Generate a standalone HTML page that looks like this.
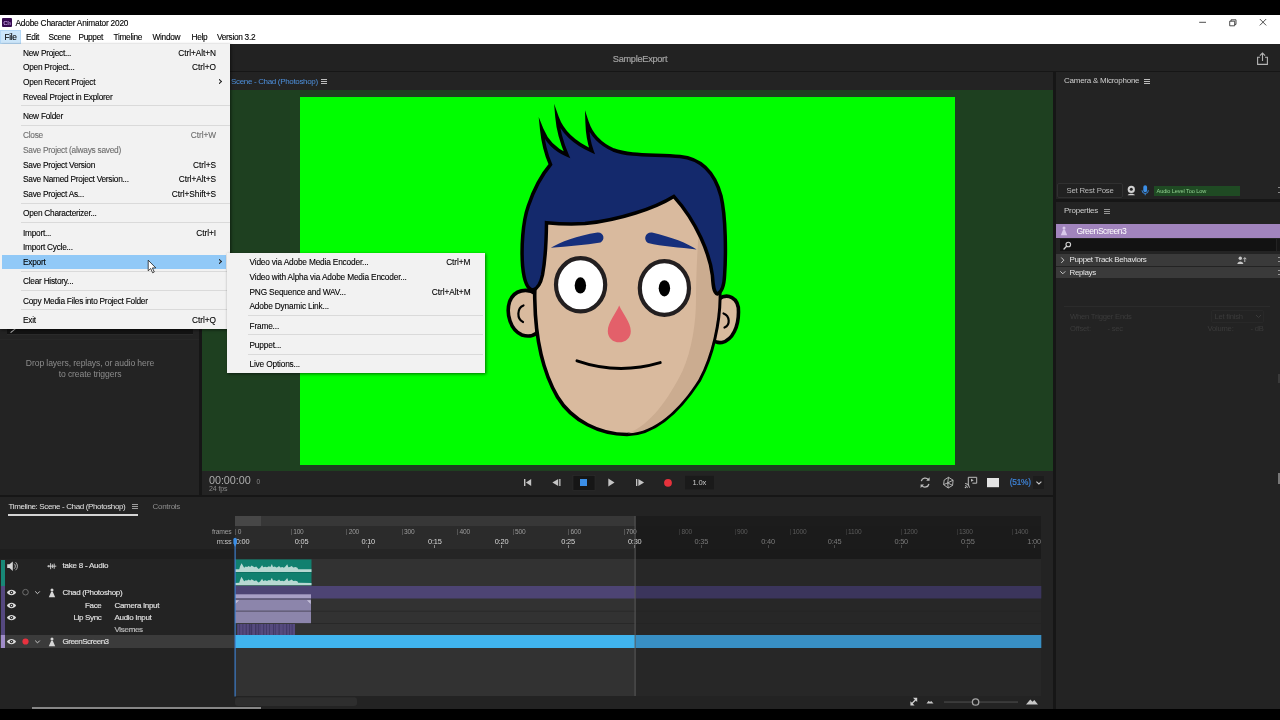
<!DOCTYPE html>
<html lang="en">
<head>
<meta charset="utf-8">
<title>Adobe Character Animator 2020</title>
<style>
*{box-sizing:border-box;margin:0;padding:0}
html,body{width:1280px;height:720px;overflow:hidden;background:#000}
body{position:relative;will-change:transform;font-family:"Liberation Sans",sans-serif;font-size:8px;color:#c8c8c8;-webkit-font-smoothing:antialiased}
.abs{position:absolute}
.t{position:absolute;white-space:pre;line-height:10px;height:10px}
/* title + menubar */
#titlebar{position:absolute;left:0;top:15px;width:1280px;height:15px;background:#fff}
#menubar{position:absolute;left:0;top:30px;width:1280px;height:14px;background:#fff}
#titlebar .t,#menubar .t{color:#000;font-size:8.3px;letter-spacing:-.3px;margin-top:.7px;-webkit-text-stroke:.12px #000}
#menubar .t{margin-top:0}
#app{position:absolute;left:0;top:44px;width:1280px;height:664.7px;background:#161616;overflow:hidden}
.panel{position:absolute;background:#232323}
/* dropdown menus */
.menu{position:absolute;-webkit-text-stroke:.1px currentColor;background:#f2f2f2;color:#000;font-size:8.3px;letter-spacing:-.25px;box-shadow:1px 1px 3px rgba(0,0,0,.55)}
.menu .mi{position:relative;height:14.66px;line-height:14.66px;white-space:pre}
.menu .mi .l{position:absolute;left:0;top:1.1px}
.menu .mi .r{position:absolute;top:1.1px}
.menu .sep{height:4.7px;position:relative}
.menu .sep:after{content:"";position:absolute;top:2px;height:1px;background:#dadada}
.menu .dis{color:#6d6d6d}
.ham{width:6px;height:5.4px;border-top:1px solid #bdbdbd;border-bottom:1px solid #bdbdbd}
.ham:after{content:"";position:absolute;left:0;top:1.2px;width:6px;height:1px;background:#bdbdbd}
.menu .mi .l{left:23px}
.menu .mi .r{right:13.5px;letter-spacing:-.05px}
#m2 .mi .r{right:14.2px}
.menu .mi .ar{position:absolute;left:218.8px;top:4.6px;width:3.4px;height:5.6px;font-size:0;color:transparent;overflow:hidden}
.menu .mi .ar:after{content:"";position:absolute;left:-2.6px;top:.6px;width:4px;height:4px;border-right:.9px solid #222;border-top:.9px solid #222;transform:rotate(45deg)}
.menu .mi .hl{position:absolute;left:2px;width:224px;top:1px;height:14.3px;background:#91c9f7}
.menu .sep:after{left:21px;right:0}
#m2 .sep:after{left:21.5px;right:2px}
.hd{font-size:8px;color:#dedede;letter-spacing:-.32px;-webkit-text-stroke:.2px #dedede}
#m2{letter-spacing:-.17px}
</style>
</head>
<body>
<div id="titlebar">
<div class="abs" style="left:2px;top:3px;width:9.5px;height:9px;background:#35094f;border-radius:1px"></div>
<div class="t" style="left:3.2px;top:2.6px;font-size:6px;color:#d9a6ff;letter-spacing:-0.3px;font-weight:bold">Ch</div>
<div class="t" style="left:15.5px;top:2.5px;letter-spacing:-.2px">Adobe Character Animator 2020</div>
<svg class="abs" style="left:1190px;top:0" width="90" height="15" viewBox="0 0 90 15"><g fill="none" stroke="#222" stroke-width="0.8">
<path d="M9.2 7.3h6.8"/>
<path d="M39.7 6.2h5v4.6h-5z M41 6.2v-1.4h5v4.6h-1.3"/>
<path d="M69.8 4l6.4 6.4 M76.2 4l-6.4 6.4"/>
</g></svg>
</div>
<div id="menubar">
<div class="abs" style="left:0;top:0;width:21px;height:14px;background:#cce6fa;border:1px solid #b4d8f6"></div>
<div class="t" style="left:4.5px;top:2px">File</div>
<div class="t" style="left:26px;top:2px">Edit</div>
<div class="t" style="left:48.5px;top:2px">Scene</div>
<div class="t" style="left:78.5px;top:2px">Puppet</div>
<div class="t" style="left:113.5px;top:2px">Timeline</div>
<div class="t" style="left:152.5px;top:2px">Window</div>
<div class="t" style="left:191.5px;top:2px">Help</div>
<div class="t" style="left:217px;top:2px">Version 3.2</div>
</div>
<div id="app">
<!-- workspace bar -->
<div class="panel" id="wsbar" style="left:0;top:0;width:1280px;height:27px;background:#222">
<div class="t ui" style="left:580px;width:120px;text-align:center;top:9.8px;color:#a2a2a2;font-size:9.2px;letter-spacing:-.28px;-webkit-text-stroke:.2px #a2a2a2">SampleExport</div>
<svg class="abs" style="left:1256px;top:7.7px" width="13" height="14" viewBox="0 0 13 14"><g fill="none" stroke="#b4b4b4" stroke-width="1.1"><path d="M4 5.2H1.6v7.2h9.8V5.2H9"/><path d="M6.5 9V1.2M3.9 3.6L6.5 1l2.6 2.6"/></g></svg>
</div>
<!-- left panel (Triggers) -->
<div class="panel" id="left" style="left:0;top:28px;width:199px;height:423px">
<div class="abs" style="left:6.5px;top:256px;width:186.5px;height:7.2px;background:#131313;border-bottom:1px solid #2a2a2a"></div>
<div class="abs" style="left:9.5px;top:258.2px;width:6.5px;height:1.3px;background:#c0c0c0;transform:rotate(-38deg)"></div>
<div class="abs" style="left:0;top:266.5px;width:199px;height:1px;background:#272727"></div>
<div class="t ui" style="left:0;width:180px;text-align:center;top:286px;color:#8c8c8c;font-size:8.6px;letter-spacing:-.1px">Drop layers, replays, or audio here</div>
<div class="t ui" style="left:0;width:180px;text-align:center;top:297px;color:#8c8c8c;font-size:8.6px;letter-spacing:-.1px">to create triggers</div>
</div>
<!-- scene panel -->
<div class="panel" id="scene" style="left:202px;top:28px;width:851px;height:423px">
<div class="t ui" style="left:29px;top:5px;color:#4d8fdb;font-size:8px;letter-spacing:-.33px">Scene - Chad (Photoshop)</div>
<div class="abs ham" style="left:118.5px;top:7px"></div>
<div class="abs" id="viewport" style="left:0;top:18px;width:851px;height:381px;background:#1e4020">
<div class="abs" id="green" style="left:98px;top:7px;width:655px;height:368px;background:#00fe00">
<svg class="abs" style="left:0;top:0" width="655" height="368" viewBox="300 97 655 368">
<g stroke="#000" stroke-width="3.6" stroke-linejoin="round">
<!-- ears -->
<path d="M536 294 C528 288,514 289,509.5 302 C506 313,510 330,522 335 C528 337,533 336,537 333 Z" fill="#d9ba9e"/>
<path d="M719 299 C727 293,739 297,738.5 312 C738.5 326,733 340,722 342.5 C718 343,715 342,713 340 Z" fill="#d9ba9e"/>
<!-- face -->
<path id="facep" d="M545 215 C538 250,534 278,534.8 300 C535.5 340,543 372,557.5 397 C572 421,600 434.5,627 434.5 C655 434,680 410,699.5 380 C713 355,719.5 322,719.8 298 C720 270,716 240,705 212 L674 190 Z" fill="#d9ba9e"/>
</g>
<!-- face shadow -->
<path d="M700 214 C716 240,719 270,718.6 298 C718.3 322,712 355,698.5 379.5 C680 409,655 432.8,628 433.3 C650 425,668 400,682.5 371 C692 350,696 322,696 300 C696 270,698 240,700 214 Z" fill="#cbac90"/>
<!-- ear inner -->
<g fill="none" stroke="#000" stroke-width="2.2" stroke-linecap="round">
<path d="M523.5 305.5 C517 308,516.5 319,523 322"/>
<path d="M723.5 313.5 C730 316,730.5 325,724.5 327.5"/>
</g>
<!-- hair -->
<path d="M533 290 C527.5 289.500,524 281,522.600 266 C521.2 248,522.6 222,528.3 206 C533 192,540 177,550.5 164.5 C545.5 153,543 142,541.7 129.200 C546 140,553 149,567 155 C561 141,558 129,557 117.200 C561.500 130,572 142,592 151 C588.300 141,587.400 132,587.100 122.200 C591 134,598 143,613.500 150 C630 156.300,655 154.300,680 156.500 C701 158.500,714.500 172,721 196 C726 217,726 255,724.600 275 C724.200 284,722 292,717.500 294 C713.400 293,713 284,712.400 275.400 C710 255,697 222,673.800 196.400 C655 208,620 220,585 223.6 C570 224.6,556 223.7,546.5 222.7 C546.300 240,545.300 260,542.500 275 C541 282,538.500 288.500,533 290 Z" fill="#14296c" stroke="#000" stroke-width="3.5" stroke-linejoin="miter" stroke-miterlimit="30"/>
<!-- brows -->
<path d="M550.800 247.800 C560 242,577 235.500,597.500 232.400 C604 232,605.500 239.500,600.500 242.500 C585 245.500,568 246,550.800 247.800 Z" fill="#162f7c"/>
<path d="M696.600 249.600 C688 243.500,671 237,652 232.600 C645 232,643 240,648 243 C662 246.500,680 247.300,696.600 249.600 Z" fill="#162f7c"/>
<!-- eyes -->
<g fill="#fff" stroke="#231f20" stroke-width="4.2">
<ellipse cx="580.6" cy="284.8" rx="24.6" ry="26.6"/>
<ellipse cx="664.4" cy="288" rx="24.6" ry="26.8"/>
</g>
<ellipse cx="580.4" cy="285.4" rx="5.700" ry="8.100" fill="#000"/>
<ellipse cx="664.4" cy="288.3" rx="5.700" ry="8.100" fill="#000"/>
<!-- nose -->
<path d="M619.200 305.500 C622.500 313.500,630.800 322,630.800 331.200 C630.800 338,625.500 342.300,619.300 342.300 C613 342.300,607.800 338,607.800 331.200 C607.800 322,616 313.500,619.200 305.500 Z" fill="#e3606a"/>
<!-- mouth -->
<path d="M577 360.8 Q618 375 660.2 362.6" fill="none" stroke="#000" stroke-width="3" stroke-linecap="round"/>
</svg>
</div>
</div>
<div class="abs" id="transport" style="left:0;top:399px;width:851px;height:24px">
<div class="t ui" style="left:7px;top:3.5px;font-size:10.8px;line-height:11px;color:#adadad;letter-spacing:-.05px">00:00:00</div>
<div class="t ui" style="left:54.5px;top:5.5px;font-size:6.5px;color:#8a8a8a">0</div>
<div class="t ui" style="left:7px;top:13.3px;font-size:7px;color:#8a8a8a;letter-spacing:-.1px">24 fps</div>
<svg class="abs" style="left:310px;top:0" width="220" height="24" viewBox="512 471 220 24">
<g fill="#c4c4c4">
<rect x="524" y="479" width="1.4" height="7"/><path d="M531.2 479v7l-5.3-3.5z"/>
<path d="M558.2 479v7l-5.8-3.5z"/><rect x="559.2" y="479" width="1.3" height="7"/>
<path d="M608.3 478.6v7.8l6.2-3.9z"/>
<rect x="636" y="479" width="1.3" height="7"/><path d="M638.3 479v7l5.8-3.5z"/>
</g>
<rect x="573" y="475.5" width="22" height="15" fill="#161616" stroke="#2e2e2e" stroke-width=".6"/>
<rect x="580" y="479" width="7" height="7" fill="#3b8ee6"/>
<circle cx="668" cy="482.8" r="3.9" fill="#e6323c"/>
<rect x="685" y="475.8" width="29" height="13.6" fill="#1a1a1a"/>
<text x="699.3" y="485.4" font-family="Liberation Sans, sans-serif" font-size="7.6" fill="#c8c8c8" text-anchor="middle" letter-spacing="-.2">1.0x</text>
</svg>
<svg class="abs" style="left:708px;top:0" width="143" height="24" viewBox="910 471 143 24">
<g fill="none" stroke="#bdbdbd" stroke-width="1.3">
<path d="M921.3 481.2a4 4 0 0 1 7-1.6"/><path d="M928.9 484a4 4 0 0 1-7 1.6"/>
</g>
<path d="M929.6 477.3v3.4h-3.4z M920.6 487.9v-3.4h3.4z" fill="#bdbdbd"/>
<g fill="none" stroke="#bdbdbd" stroke-width=".9" stroke-linejoin="round">
<path d="M948.5 477.3l4.6 2.9-.5 5.2-4.4 2.6-4.6-3.4.6-4.6z"/><path d="M948.5 477.3l-.8 5.6 4.9 2.5M947.700 482.9l-4.100 1.700M947.700 482.900l.500 5.100M947.700 482.900L953.100 480.200"/>
<path d="M968.3 485.500V477.300h8.400v5.900h-4.300" stroke-width="1"/>
<path d="M965.200 483.400a4.500 4.500 0 0 1 4.300 4.300M965.200 485.600a2.300 2.300 0 0 1 2.200 2.200" stroke-width="1"/>
</g>
<path d="M971 478.800v3l2.700-1.500z" fill="#bdbdbd"/>
<circle cx="965.500" cy="487.500" r=".8" fill="#bdbdbd"/>
<rect x="987" y="478" width="12" height="9.200" fill="#e4e4e4"/>
<text x="1009.800" y="485.400" font-family="Liberation Sans, sans-serif" font-size="8.3" fill="#3f86dc" letter-spacing="-.25" stroke="#3f86dc" stroke-width=".2">(51%)</text>
<rect x="1033" y="476" width="11" height="13" fill="#1c1c1c"/>
<path d="M1036.400 481.600l2.500 2.400 2.500-2.400" fill="none" stroke="#c8c8c8" stroke-width="1.100"/>
</svg>
</div>
</div>
<!-- camera & microphone -->
<div class="panel" id="cam" style="left:1056px;top:28px;width:224px;height:127px">
<div class="t ui" style="left:8px;top:4px;color:#cfcfcf;font-size:8px;letter-spacing:-.25px">Camera &amp; Microphone</div>
<div class="abs ham" style="left:87.5px;top:6.5px"></div>
<div class="abs" style="left:1px;top:111px;width:66px;height:15px;border:1px solid #303030;border-radius:2px;background:#212121"></div>
<div class="t ui" style="left:1px;width:66px;text-align:center;top:113.5px;color:#b9b9b9;font-size:7.8px;letter-spacing:-.2px">Set Rest Pose</div>
<svg class="abs" style="left:70px;top:111px" width="26" height="15" viewBox="1126 183 26 15">
<circle cx="1131.3" cy="189.400" r="3.600" fill="#d2d2d2"/><circle cx="1131.300" cy="189.200" r="1.500" fill="#232323"/><path d="M1127.700 195.300c.400-2 6.800-2 7.200 0z" fill="#d2d2d2"/>
<rect x="1143.300" y="185.200" width="3.800" height="7" rx="1.900" fill="#3b8ee6"/><path d="M1142 190.300a3.200 3.200 0 0 0 6.400 0M1145.200 193.500v1.800" fill="none" stroke="#3b8ee6" stroke-width=".9"/>
</svg>
<div class="abs" style="left:98px;top:114px;width:85.500px;height:9.500px;background:#1f4a23"></div>
<div class="t ui" style="left:100.500px;top:113.800px;color:#8fd08f;font-size:5.600px;letter-spacing:-.1px">Audio Level Too Low</div>
<div class="abs" style="left:221.500px;top:115px;width:3px;height:6px;border-top:1px solid #888;border-bottom:1px solid #888"></div>
</div>
<!-- properties -->
<div class="panel" id="props" style="left:1056px;top:158px;width:224px;height:507px">
<div class="t ui" style="left:8px;top:4.300px;color:#cfcfcf;font-size:8px;letter-spacing:-.25px">Properties</div>
<div class="abs ham" style="left:47.500px;top:6.500px;opacity:.75"></div>
<div class="abs" style="left:0;top:21.800px;width:224px;height:13.800px;background:#a184bd"></div>
<svg class="abs" style="left:4px;top:23.500px" width="8" height="10" viewBox="0 0 8 10"><circle cx="4" cy="1.900" r="1.500" fill="#d9c8ea"/><path d="M3.200 3.600h1.600l2.400 5.600H.8z" fill="#d9c8ea"/></svg>
<div class="t ui" style="left:20.500px;top:23.700px;color:#fff;font-size:8.6px;letter-spacing:-.5px">GreenScreen3</div>
<div class="abs" style="left:4px;top:36.500px;width:216px;height:12.500px;background:#121212"></div>
<div class="abs" style="left:220.500px;top:36.500px;width:3.500px;height:12.500px;background:#161616"></div>
<svg class="abs" style="left:7px;top:38.500px" width="9" height="9" viewBox="0 0 9 9"><circle cx="5.300" cy="3.500" r="2.300" fill="none" stroke="#d0d0d0" stroke-width="1.100"/><path d="M3.600 5.300L1 8" stroke="#d0d0d0" stroke-width="1.300" stroke-linecap="round"/></svg>
<div class="abs" style="left:0;top:51.700px;width:224px;height:12px;background:#3a3a3a"></div>
<div class="abs" style="left:0;top:64.700px;width:224px;height:11.500px;background:#3a3a3a"></div>
<svg class="abs" style="left:3px;top:53.500px" width="8" height="22" viewBox="0 0 8 22"><path d="M2.300 1.500l2.500 2.700-2.500 2.700" fill="none" stroke="#c8c8c8" stroke-width="1"/><path d="M1.300 15.300l2.500 2.500 2.500-2.500" fill="none" stroke="#c8c8c8" stroke-width="1"/></svg>
<div class="t ui" style="left:13.500px;top:53px;color:#e6e6e6;font-size:8px;letter-spacing:-.36px">Puppet Track Behaviors</div>
<div class="t ui" style="left:13.500px;top:65.7px;color:#e6e6e6;font-size:8px;letter-spacing:-.36px">Replays</div>
<svg class="abs" style="left:181px;top:53.500px" width="10" height="9" viewBox="0 0 10 9"><circle cx="3.300" cy="2.300" r="1.700" fill="#c8c8c8"/><path d="M.3 8c.2-3.400 5.800-3.400 6 0z" fill="#c8c8c8"/><path d="M7.800 6V1.800M6.300 3.200l1.500-1.600 1.500 1.600" fill="none" stroke="#c8c8c8" stroke-width=".9"/></svg>
<div class="abs" style="left:221.500px;top:54.500px;width:3px;height:5px;border-top:1px solid #999;border-bottom:1px solid #999"></div>
<div class="abs" style="left:221.500px;top:67.500px;width:3px;height:5px;border-top:1px solid #999;border-bottom:1px solid #999"></div>
<div class="abs" style="left:8px;top:104px;width:206px;height:1px;background:#2b2b2b"></div>
<div class="t ui" style="left:14px;top:109.500px;color:#3b3b3b;font-size:7.6px;letter-spacing:-.2px">When Trigger Ends</div>
<div class="t ui" style="left:14px;top:122.300px;color:#3b3b3b;font-size:7.6px;letter-spacing:-.2px">Offset:</div>
<div class="t ui" style="left:51.500px;top:122.300px;color:#3b3b3b;font-size:7.6px;letter-spacing:-.2px">- sec</div>
<div class="abs" style="left:155px;top:107.500px;width:53px;height:13px;border:1px solid #282828;border-radius:2px"></div>
<div class="t ui" style="left:158.500px;top:109.500px;color:#3b3b3b;font-size:7.6px;letter-spacing:-.2px">Let finish</div>
<svg class="abs" style="left:199px;top:111.500px" width="7" height="5" viewBox="0 0 7 5"><path d="M1 1l2.500 2.500L6 1" fill="none" stroke="#3b3b3b" stroke-width="1"/></svg>
<div class="t ui" style="left:151.500px;top:122.300px;color:#3b3b3b;font-size:7.6px;letter-spacing:-.2px">Volume:</div>
<div class="t ui" style="left:194.500px;top:122.300px;color:#3b3b3b;font-size:7.6px;letter-spacing:-.2px">- dB</div>
<div class="abs" style="left:221.500px;top:172px;width:3px;height:9px;background:#3a3a3a"></div>
<div class="abs" style="left:221.500px;top:271px;width:3px;height:11px;background:#777"></div>
</div>
<!-- timeline -->
<div class="panel" id="timeline" style="left:0;top:453px;width:1053px;height:212px">
<div class="t ui" style="left:8.500px;top:4.800px;color:#e4e4e4;font-size:8px;letter-spacing:-.36px">Timeline: Scene - Chad (Photoshop)</div>
<div class="abs ham" style="left:131.500px;top:7px;opacity:.8"></div>
<div class="abs" style="left:8px;top:17px;width:130px;height:1.600px;background:#d4d4d4"></div>
<div class="t ui" style="left:152.500px;top:4.800px;color:#8e8e8e;font-size:8px;letter-spacing:-.28px">Controls</div>
<!-- ruler backgrounds -->
<div class="abs" style="left:235px;top:19px;width:400px;height:9.800px;background:#373737"></div>
<div class="abs" style="left:235px;top:19px;width:26px;height:9.800px;background:#474747"></div>
<div class="abs" style="left:635px;top:19px;width:406px;height:9.800px;background:#1c1c1c"></div>
<div class="abs" style="left:235px;top:28.8px;width:400px;height:23px;background:#2b2b2b"></div>
<div class="abs" style="left:635px;top:28.8px;width:406px;height:23px;background:#1b1b1b"></div>
<div class="abs" style="left:0;top:51.8px;width:235px;height:10.400px;background:#1e1e1e"></div>
<div class="abs" style="left:235px;top:51.8px;width:400px;height:10.400px;background:#252525"></div>
<div class="abs" style="left:635px;top:51.8px;width:406px;height:10.4px;background:#1a1a1a"></div>
<!-- tracks bg -->
<div class="abs" style="left:235px;top:62.2px;width:400px;height:136.8px;background:#323232"></div>
<div class="abs" style="left:635px;top:62.2px;width:406px;height:136.8px;background:#272727"></div>
<div class="abs" style="left:0;top:138px;width:235px;height:13px;background:#3b3b3b"></div>
<div class="t ui" style="left:200px;width:31.500px;text-align:right;top:30.4px;font-size:6.8px;color:#9c9c9c;letter-spacing:-.2px">frames</div>
<div class="t ui" style="left:200px;width:31.500px;text-align:right;top:40px;font-size:7.4px;color:#c4c4c4;letter-spacing:-.2px">m:ss</div>
<div class="abs" style="left:235.4px;top:32px;width:1px;height:6px;background:#555"></div><div class="t ui" style="left:237.7px;top:30.4px;font-size:6.6px;color:#9c9c9c;letter-spacing:-.2px">0</div><div class="abs" style="left:290.9px;top:32px;width:1px;height:6px;background:#555"></div><div class="t ui" style="left:293.2px;top:30.4px;font-size:6.6px;color:#9c9c9c;letter-spacing:-.2px">100</div><div class="abs" style="left:346.4px;top:32px;width:1px;height:6px;background:#555"></div><div class="t ui" style="left:348.7px;top:30.4px;font-size:6.6px;color:#9c9c9c;letter-spacing:-.2px">200</div><div class="abs" style="left:401.8px;top:32px;width:1px;height:6px;background:#555"></div><div class="t ui" style="left:404.1px;top:30.4px;font-size:6.6px;color:#9c9c9c;letter-spacing:-.2px">300</div><div class="abs" style="left:457.3px;top:32px;width:1px;height:6px;background:#555"></div><div class="t ui" style="left:459.6px;top:30.4px;font-size:6.6px;color:#9c9c9c;letter-spacing:-.2px">400</div><div class="abs" style="left:512.8px;top:32px;width:1px;height:6px;background:#555"></div><div class="t ui" style="left:515.1px;top:30.4px;font-size:6.6px;color:#9c9c9c;letter-spacing:-.2px">500</div><div class="abs" style="left:568.3px;top:32px;width:1px;height:6px;background:#555"></div><div class="t ui" style="left:570.6px;top:30.4px;font-size:6.6px;color:#9c9c9c;letter-spacing:-.2px">600</div><div class="abs" style="left:623.8px;top:32px;width:1px;height:6px;background:#555"></div><div class="t ui" style="left:626.1px;top:30.4px;font-size:6.6px;color:#9c9c9c;letter-spacing:-.2px">700</div><div class="abs" style="left:679.2px;top:32px;width:1px;height:6px;background:#333"></div><div class="t ui" style="left:681.5px;top:30.4px;font-size:6.6px;color:#5c5c5c;letter-spacing:-.2px">800</div><div class="abs" style="left:734.7px;top:32px;width:1px;height:6px;background:#333"></div><div class="t ui" style="left:737.0px;top:30.4px;font-size:6.6px;color:#5c5c5c;letter-spacing:-.2px">900</div><div class="abs" style="left:790.2px;top:32px;width:1px;height:6px;background:#333"></div><div class="t ui" style="left:792.5px;top:30.4px;font-size:6.6px;color:#5c5c5c;letter-spacing:-.2px">1000</div><div class="abs" style="left:845.7px;top:32px;width:1px;height:6px;background:#333"></div><div class="t ui" style="left:848.0px;top:30.4px;font-size:6.6px;color:#5c5c5c;letter-spacing:-.2px">1100</div><div class="abs" style="left:901.2px;top:32px;width:1px;height:6px;background:#333"></div><div class="t ui" style="left:903.5px;top:30.4px;font-size:6.6px;color:#5c5c5c;letter-spacing:-.2px">1200</div><div class="abs" style="left:956.6px;top:32px;width:1px;height:6px;background:#333"></div><div class="t ui" style="left:958.9px;top:30.4px;font-size:6.6px;color:#5c5c5c;letter-spacing:-.2px">1300</div><div class="abs" style="left:1012.1px;top:32px;width:1px;height:6px;background:#333"></div><div class="t ui" style="left:1014.4px;top:30.4px;font-size:6.6px;color:#5c5c5c;letter-spacing:-.2px">1400</div>
<div class="t ui" style="left:235.8px;top:40px;font-size:7.4px;color:#d8d8d8;letter-spacing:-.2px">0:00</div><div class="t ui" style="left:286.6px;width:30px;text-align:center;top:40px;font-size:7.4px;color:#d8d8d8;letter-spacing:-.2px">0:05</div><div class="abs" style="left:301.1px;top:48px;width:1px;height:3px;background:#8a8a8a"></div><div class="t ui" style="left:353.2px;width:30px;text-align:center;top:40px;font-size:7.4px;color:#d8d8d8;letter-spacing:-.2px">0:10</div><div class="abs" style="left:367.7px;top:48px;width:1px;height:3px;background:#8a8a8a"></div><div class="t ui" style="left:419.9px;width:30px;text-align:center;top:40px;font-size:7.4px;color:#d8d8d8;letter-spacing:-.2px">0:15</div><div class="abs" style="left:434.4px;top:48px;width:1px;height:3px;background:#8a8a8a"></div><div class="t ui" style="left:486.5px;width:30px;text-align:center;top:40px;font-size:7.4px;color:#d8d8d8;letter-spacing:-.2px">0:20</div><div class="abs" style="left:501.0px;top:48px;width:1px;height:3px;background:#8a8a8a"></div><div class="t ui" style="left:553.1px;width:30px;text-align:center;top:40px;font-size:7.4px;color:#d8d8d8;letter-spacing:-.2px">0:25</div><div class="abs" style="left:567.6px;top:48px;width:1px;height:3px;background:#8a8a8a"></div><div class="t ui" style="left:619.7px;width:30px;text-align:center;top:40px;font-size:7.4px;color:#d8d8d8;letter-spacing:-.2px">0:30</div><div class="abs" style="left:634.2px;top:48px;width:1px;height:3px;background:#8a8a8a"></div><div class="t ui" style="left:686.3px;width:30px;text-align:center;top:40px;font-size:7.4px;color:#7a7a7a;letter-spacing:-.2px">0:35</div><div class="abs" style="left:700.8px;top:48px;width:1px;height:3px;background:#4a4a4a"></div><div class="t ui" style="left:753.0px;width:30px;text-align:center;top:40px;font-size:7.4px;color:#7a7a7a;letter-spacing:-.2px">0:40</div><div class="abs" style="left:767.5px;top:48px;width:1px;height:3px;background:#4a4a4a"></div><div class="t ui" style="left:819.6px;width:30px;text-align:center;top:40px;font-size:7.4px;color:#7a7a7a;letter-spacing:-.2px">0:45</div><div class="abs" style="left:834.1px;top:48px;width:1px;height:3px;background:#4a4a4a"></div><div class="t ui" style="left:886.2px;width:30px;text-align:center;top:40px;font-size:7.4px;color:#7a7a7a;letter-spacing:-.2px">0:50</div><div class="abs" style="left:900.7px;top:48px;width:1px;height:3px;background:#4a4a4a"></div><div class="t ui" style="left:952.8px;width:30px;text-align:center;top:40px;font-size:7.4px;color:#7a7a7a;letter-spacing:-.2px">0:55</div><div class="abs" style="left:967.3px;top:48px;width:1px;height:3px;background:#4a4a4a"></div><div class="t ui" style="left:1008.4px;width:32.5px;text-align:right;top:40px;font-size:7.4px;color:#7a7a7a;letter-spacing:-.2px">1:00</div><div class="abs" style="left:1033.9px;top:48px;width:1px;height:3px;background:#4a4a4a"></div>
<!-- header labels -->
<div class="abs" style="left:1px;top:63px;width:3.500px;height:25.500px;background:#188877"></div>
<div class="abs" style="left:1px;top:89px;width:3.500px;height:49px;background:#55487f"></div>
<div class="abs" style="left:1px;top:138px;width:3.500px;height:13px;background:#a08cc9"></div>
<div class="t ui hd" style="left:62.500px;top:64.3px;letter-spacing:-.22px">take 8 - Audio</div>
<div class="t ui hd" style="left:62.500px;top:90.8px">Chad (Photoshop)</div>
<div class="t ui hd" style="left:40px;width:61.500px;text-align:right;top:103.5px">Face</div>
<div class="t ui hd" style="left:114.500px;top:103.5px">Camera Input</div>
<div class="t ui hd" style="left:40px;width:61.500px;text-align:right;top:115.5px">Lip Sync</div>
<div class="t ui hd" style="left:114.500px;top:115.5px">Audio Input</div>
<div class="t ui hd" style="left:114.500px;top:127.5px;color:#a2a2a2">Visemes</div>
<div class="t ui hd" style="left:62.500px;top:139.8px;letter-spacing:-.5px">GreenScreen3</div>
<svg class="abs" style="left:0;top:13px" width="1053" height="198" viewBox="0 510 1053 198">
<!-- header icons -->
<path d="M7.200 564.300h2.300l3.300-2.800v9.400l-3.300-2.800H7.200z" fill="#d6d6d6"/><path d="M14.200 563.700a3.300 3.300 0 0 1 0 5M15.600 562.200a5.300 5.300 0 0 1 0 8" fill="none" stroke="#d6d6d6" stroke-width=".8"/>
<path d="M47.300 566.200h9M48.800 565v2.400M50.600 563.200v6M52.400 564.300v3.800M54.200 563.600v5.200" stroke="#d6d6d6" stroke-width=".9" fill="none"/>
<g transform="translate(11.5 592.5)"><path d="M-4.6 0C-2.6-3.6 2.600-3.600 4.600 0 2.600 3.600-2.600 3.600-4.600 0z" fill="#dcdcdc"/><circle r="1.700" fill="#232323"/><circle r=".7" fill="#dcdcdc"/></g><g transform="translate(11.5 605.5)"><path d="M-4.6 0C-2.6-3.6 2.600-3.600 4.600 0 2.600 3.600-2.600 3.600-4.600 0z" fill="#dcdcdc"/><circle r="1.700" fill="#232323"/><circle r=".7" fill="#dcdcdc"/></g><g transform="translate(11.5 617.6)"><path d="M-4.6 0C-2.6-3.6 2.600-3.600 4.600 0 2.600 3.600-2.600 3.600-4.600 0z" fill="#dcdcdc"/><circle r="1.700" fill="#232323"/><circle r=".7" fill="#dcdcdc"/></g><g transform="translate(11.5 641.6)"><path d="M-4.6 0C-2.6-3.6 2.600-3.600 4.600 0 2.600 3.600-2.600 3.600-4.600 0z" fill="#dcdcdc"/><circle r="1.700" fill="#232323"/><circle r=".7" fill="#dcdcdc"/></g>
<circle cx="25.500" cy="592.200" r="2.800" fill="none" stroke="#6e6e6e" stroke-width="1"/>
<circle cx="25.500" cy="641.500" r="3.100" fill="#e8323f"/>
<path d="M35.2 591.4l2.300 2.300 2.300-2.300" fill="none" stroke="#c8c8c8" stroke-width="1"/><path d="M35.2 640.6l2.300 2.300 2.300-2.300" fill="none" stroke="#c8c8c8" stroke-width="1"/>
<g transform="translate(52 593)" fill="#d6d6d6"><circle cy="-2.900" r="1.500"/><path d="M-.8-1.200h1.600l2.400 5.400h-6.400z"/></g><g transform="translate(52 642)" fill="#d6d6d6"><circle cy="-2.900" r="1.500"/><path d="M-.8-1.200h1.600l2.400 5.400h-6.400z"/></g>
<!-- clips -->
<rect x="235" y="559.4" width="76.5" height="26" fill="#11806f"/>
<rect x="235" y="572.1" width="76.5" height=".6" fill="#0c665a"/>
<polygon points="235.00,572.10 235.00,569.20 239.25,569.13 240.00,566.50 241.50,563.13 242.63,565.00 244.13,567.63 245.63,566.50 247.13,566.88 248.63,565.90 250.13,566.88 251.63,565.60 253.13,566.50 254.63,567.25 256.13,566.50 257.63,568.00 258.75,568.90 260.25,567.63 262.13,565.15 263.25,567.25 265.13,566.65 267.00,567.25 268.88,566.35 270.38,566.88 271.88,564.10 273.00,566.88 274.88,566.50 276.38,567.40 277.88,566.88 279.00,565.90 280.50,567.40 282.38,567.10 283.88,567.63 285.38,566.50 287.25,564.25 288.38,567.25 289.88,566.88 291.75,565.90 293.25,567.40 295.50,567.10 297.38,567.63 298.13,569.13 311.50,569.20 311.50,572.10" fill="#b7d8d2"/>
<polygon points="235.00,585.30 235.00,583.00 239.25,582.83 240.00,580.20 241.50,576.83 242.63,578.70 244.13,581.33 245.63,580.20 247.13,580.58 248.63,579.60 250.13,580.58 251.63,579.30 253.13,580.20 254.63,580.95 256.13,580.20 257.63,581.70 258.75,582.60 260.25,581.33 262.13,578.85 263.25,580.95 265.13,580.35 267.00,580.95 268.88,580.05 270.38,580.58 271.88,577.80 273.00,580.58 274.88,580.20 276.38,581.10 277.88,580.58 279.00,579.60 280.50,581.10 282.38,580.80 283.88,581.33 285.38,580.20 287.25,577.95 288.38,580.95 289.88,580.58 291.75,579.60 293.25,581.10 295.50,580.80 297.38,581.33 298.13,582.83 311.50,583.00 311.50,585.30" fill="#b7d8d2"/>
<rect x="235" y="586" width="400" height="12.500" fill="#4d4474"/>
<rect x="635" y="586" width="406.300" height="12.500" fill="#3b355c"/>
<rect x="235" y="594.300" width="76" height="4.200" fill="#a8a0c6"/>
<rect x="235" y="598.5" width="76" height="1.2" fill="#615a7c"/><rect x="235" y="599.7" width="76" height="11.1" fill="#8c85ab"/>
<rect x="235" y="610.8" width="76" height=".8" fill="#615a7c"/><rect x="235" y="611.6" width="76" height="11.5" fill="#8c85ab"/>
<path d="M235.300 600.200h3.800l-3.800 3.800z M310.700 600.200h-3.800l3.800 3.800z" fill="#c4bfd8"/>
<rect x="311" y="610.800" width="730" height=".7" fill="#252525"/>
<rect x="311" y="623" width="730" height=".7" fill="#252525"/>
<rect x="237" y="624" width="58" height="11" fill="#554a7e"/>
<rect x="237.5" y="624" width="0.6" height="11" fill="#3f3763"/><rect x="239.3" y="624" width="0.8" height="11" fill="#3f3763"/><rect x="242.5" y="624" width="0.8" height="11" fill="#3f3763"/><rect x="245.7" y="624" width="1" height="11" fill="#3f3763"/><rect x="248.9" y="624" width="1.4" height="11" fill="#3f3763"/><rect x="250.8" y="624" width="1.4" height="11" fill="#3f3763"/><rect x="255.0" y="624" width="1.4" height="11" fill="#3f3763"/><rect x="257.8" y="624" width="1" height="11" fill="#3f3763"/><rect x="259.7" y="624" width="0.6" height="11" fill="#3f3763"/><rect x="263.2" y="624" width="1" height="11" fill="#3f3763"/><rect x="266.1" y="624" width="0.8" height="11" fill="#3f3763"/><rect x="269.0" y="624" width="0.8" height="11" fill="#3f3763"/><rect x="273.1" y="624" width="1" height="11" fill="#3f3763"/><rect x="275.1" y="624" width="0.6" height="11" fill="#3f3763"/><rect x="278.6" y="624" width="1" height="11" fill="#3f3763"/><rect x="282.8" y="624" width="0.6" height="11" fill="#3f3763"/><rect x="286.2" y="624" width="1" height="11" fill="#3f3763"/><rect x="289.1" y="624" width="0.8" height="11" fill="#3f3763"/><rect x="291.7" y="624" width="0.8" height="11" fill="#3f3763"/>
<rect x="235" y="635" width="400" height="13" fill="#40b4ee"/>
<rect x="635" y="635" width="406.300" height="13" fill="#388fc4"/>
<!-- work area end + playhead -->
<rect x="634.600" y="516" width="1" height="180" fill="#5a5a5a"/>
<rect x="234.500" y="545" width="1.200" height="151.500" fill="#3d7cc9"/>
<path d="M233.400 539.400a1.700 1.700 0 0 1 3.400 0v3.800l-1.700 3.800-1.700-3.800z" fill="#3b8ee6"/>
<!-- bottom -->
<rect x="235" y="697.300" width="122" height="8.700" rx="3" fill="#2e2e2e"/>
<g transform="translate(0 .5)"><path d="M911.700 703.200l4.200-4.200" stroke="#d0d0d0" stroke-width="1.300" fill="none"/><path d="M913 697.300h4.200v4.200z M914.600 704.900h-4.200v-4.200z" fill="#d0d0d0"/></g>
<path d="M926.500 703.500l2.200-2.800 1.300 1.300 1.200-1 2.300 2.500z" fill="#c8c8c8"/>
<rect x="944" y="701.400" width="74" height="1.300" fill="#474747"/>
<circle cx="975.600" cy="702" r="3.200" fill="#232323" stroke="#a6a6a6" stroke-width="1.300"/>
<path d="M1026 704.600l4.300-5.200 2.200 2.400 1.800-1.900 3.700 4.700z" fill="#c8c8c8"/>
</svg>
</div>
</div>
<div class="abs" style="left:32px;top:707.3px;width:229px;height:2.1px;background:#868686"></div>
<div class="menu" id="m1" style="left:0;top:44px;width:229.5px;height:285px;padding-top:.7px">
<div class="mi"><span class="l">New Project...</span><span class="r">Ctrl+Alt+N</span></div>
<div class="mi"><span class="l">Open Project...</span><span class="r">Ctrl+O</span></div>
<div class="mi"><span class="l">Open Recent Project</span><span class="ar">&#x203A;</span></div>
<div class="mi"><span class="l">Reveal Project in Explorer</span></div>
<div class="sep"></div>
<div class="mi"><span class="l">New Folder</span></div>
<div class="sep"></div>
<div class="mi dis"><span class="l">Close</span><span class="r">Ctrl+W</span></div>
<div class="mi dis"><span class="l">Save Project (always saved)</span></div>
<div class="mi"><span class="l">Save Project Version</span><span class="r">Ctrl+S</span></div>
<div class="mi"><span class="l">Save Named Project Version...</span><span class="r">Ctrl+Alt+S</span></div>
<div class="mi"><span class="l">Save Project As...</span><span class="r">Ctrl+Shift+S</span></div>
<div class="sep"></div>
<div class="mi"><span class="l">Open Characterizer...</span></div>
<div class="sep"></div>
<div class="mi"><span class="l">Import...</span><span class="r">Ctrl+I</span></div>
<div class="mi"><span class="l">Import Cycle...</span></div>
<div class="mi"><div class="hl"></div><span class="l">Export</span><span class="ar">&#x203A;</span></div>
<div class="sep"></div>
<div class="mi"><span class="l">Clear History...</span></div>
<div class="sep"></div>
<div class="mi"><span class="l">Copy Media Files into Project Folder</span></div>
<div class="sep"></div>
<div class="mi"><span class="l">Exit</span><span class="r">Ctrl+Q</span></div>
</div>
<div class="menu" id="m2" style="left:226.5px;top:253px;width:258.2px;height:120px;padding-top:1.2px">
<div class="mi"><span class="l">Video via Adobe Media Encoder...</span><span class="r">Ctrl+M</span></div>
<div class="mi"><span class="l">Video with Alpha via Adobe Media Encoder...</span></div>
<div class="mi"><span class="l">PNG Sequence and WAV...</span><span class="r">Ctrl+Alt+M</span></div>
<div class="mi"><span class="l">Adobe Dynamic Link...</span></div>
<div class="sep"></div>
<div class="mi"><span class="l">Frame...</span></div>
<div class="sep"></div>
<div class="mi"><span class="l">Puppet...</span></div>
<div class="sep"></div>
<div class="mi"><span class="l">Live Options...</span></div>
</div>
<svg class="abs" style="left:147.1px;top:259.1px" width="11" height="16" viewBox="0 0 11 16"><path d="M1.2 1.2v10.6l2.5-2.3 1.9 4.3 1.7-.8-1.9-4.1h3.4z" fill="#fff" stroke="#111" stroke-width=".75" stroke-linejoin="round"/></svg>
</body>
</html>
